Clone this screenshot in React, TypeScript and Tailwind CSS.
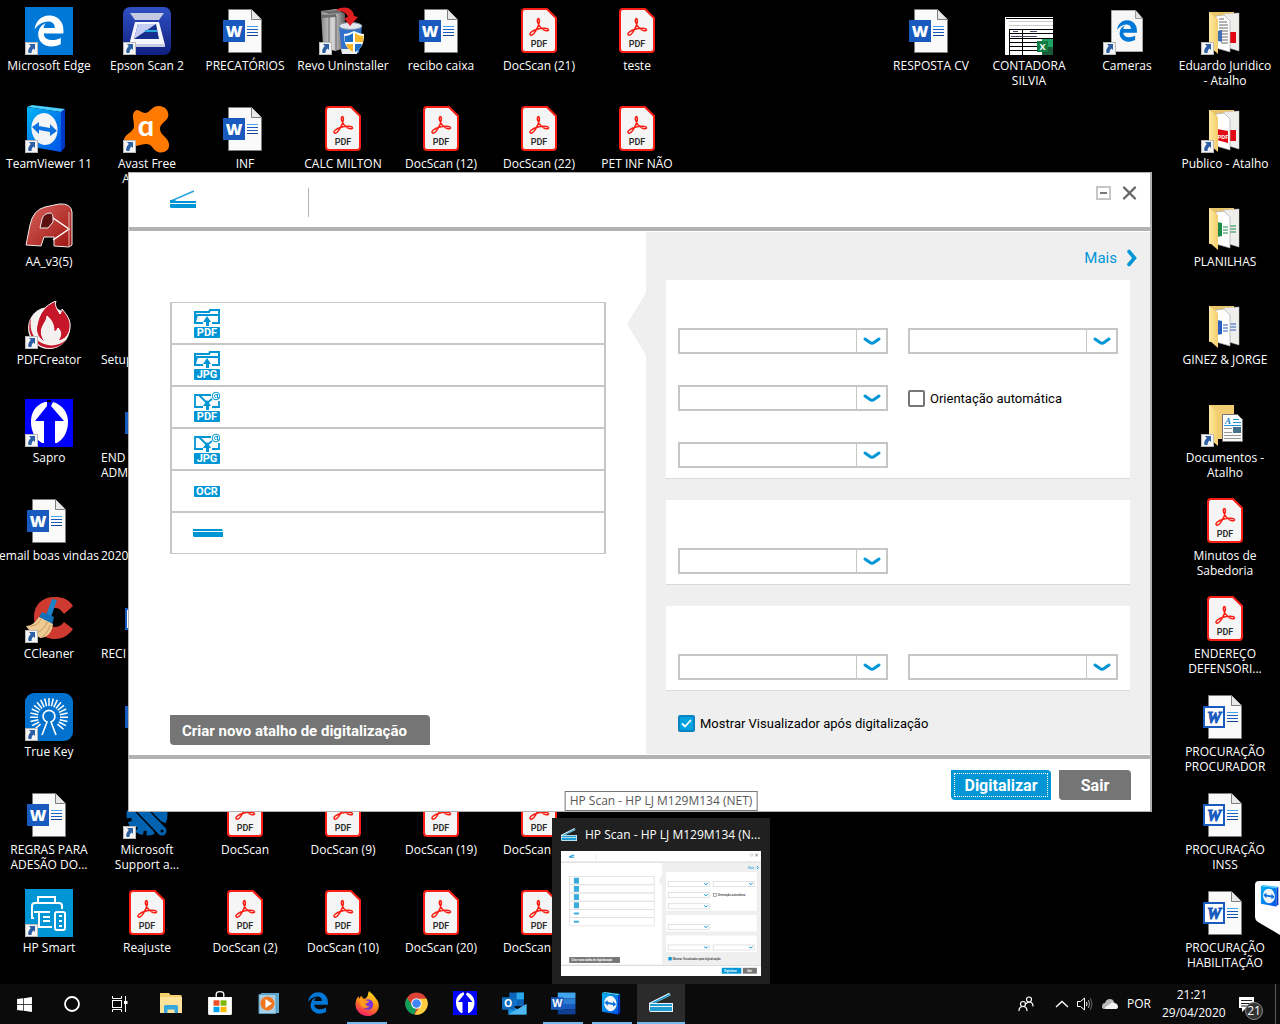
import React, { useState } from 'react';
import clsx from 'clsx';
import { FaEdgeLegacy, FaWindows } from 'react-icons/fa';

const UI_FONT = "font-['Open_Sans','Noto_Sans',sans-serif]";
const HP_FONT = "font-['Roboto','Open_Sans',sans-serif]";

/* ---------- desktop icons, all drawn on a 48x48 box ---------- */

function Svg({ children, size = 48 }: { children: React.ReactNode; size?: number }) {
  return (
    <svg viewBox="0 0 48 48" width={size} height={size} aria-hidden="true">
      {children}
    </svg>
  );
}

function SharedDefs() {
  return (
    <svg width="0" height="0" className="absolute" aria-hidden="true">
      <defs>
        <linearGradient id="tvBlue" x1="0" y1="0" x2="1" y2="1">
          <stop offset="0" stopColor="#00b4f5" />
          <stop offset="1" stopColor="#0052e6" />
        </linearGradient>
        <linearGradient id="epsonBlue" x1="0" y1="0" x2="0" y2="1">
          <stop offset="0" stopColor="#2f50c4" />
          <stop offset="1" stopColor="#10207f" />
        </linearGradient>
        <linearGradient id="cadRed" x1="0" y1="0" x2="1" y2="1">
          <stop offset="0" stopColor="#d9625c" />
          <stop offset="1" stopColor="#9c1512" />
        </linearGradient>
        <linearGradient id="folderYellow" x1="0" y1="0" x2="1" y2="0">
          <stop offset="0" stopColor="#ffe9a2" />
          <stop offset="1" stopColor="#f4cd6b" />
        </linearGradient>
        <linearGradient id="steel" x1="0" y1="0" x2="1" y2="0">
          <stop offset="0" stopColor="#8a8a8a" />
          <stop offset="0.5" stopColor="#d8d8d8" />
          <stop offset="1" stopColor="#5a5a5a" />
        </linearGradient>
        <linearGradient id="foxFire" x1="0.7" y1="0" x2="0.3" y2="1">
          <stop offset="0" stopColor="#ffe226" />
          <stop offset="0.5" stopColor="#ff8a16" />
          <stop offset="1" stopColor="#f5156c" />
        </linearGradient>
      </defs>
    </svg>
  );
}

function EdgeIcon() {
  return (
    <span className="flex size-12 items-center justify-center bg-[#0078d7] text-white">
      <FaEdgeLegacy size={32} />
    </span>
  );
}

function EpsonIcon() {
  return (
    <Svg>
      <rect width="48" height="48" rx="7" fill="url(#epsonBlue)" />
      <path d="M7 6h34l-5 7H12z" fill="#c4c8e0" />
      <path d="M12 15h24l6 23v2H6v-2z" fill="#f5f6fb" />
      <path d="M15 17h18l3 15H11z" fill="#16308f" />
      <path d="M15 17h18L11 32z" fill="#c3cdf3" />
      <path d="M22 23h12v2H22z" fill="#2aa7dc" />
      <path d="M6 37h36v3H6z" fill="#c7cbe4" />
    </Svg>
  );
}

function WordIcon({ old = false }: { old?: boolean }) {
  return (
    <Svg>
      <path d="M7.5 2.5h23l10 10v33h-33z" fill="#fafafa" stroke="#7d7d7d" />
      <path d="M30.5 2.5v10h10" fill="#e8e8e8" stroke="#7d7d7d" />
      <path d="M26 19.5h11" stroke="#41a5ee" />
      <path d="M26 22.5h11M26 25.5h11" stroke="#185abd" />
      <path d="M26 28.5h11" stroke="#103f91" />
      {old ? <rect x="3" y="14" width="20" height="20" fill="#fff" stroke="#185abd" strokeWidth="2" /> : <rect x="2" y="13" width="22" height="22" fill="#185abd" />}
      <text
        x="13"
        y="30"
        textAnchor="middle"
        fontSize="16"
        fontWeight="800"
        fontStyle={old ? 'italic' : 'normal'}
        fontFamily={old ? 'Liberation Serif' : 'Open Sans'}
        fill={old ? '#185abd' : '#fff'}
        stroke={old ? '#185abd' : 'none'}
      >
        W
      </text>
    </Svg>
  );
}

function PdfIcon() {
  return (
    <Svg>
      <path d="M10 2h22l9 9v31a3 3 0 0 1-3 3H10a3 3 0 0 1-3-3V5a3 3 0 0 1 3-3z" fill="#f5f5f5" stroke="#fa1e14" strokeWidth="2" />
      <path
        d="M15.500 28c-2-1.500 2-4.500 6.500-5.800 5-1.500 11-1.400 11.500.4.400 2-4.500 1.200-7-1.300-3-3-5-7.500-3.800-9.300 1.200-1.200 2 .6 1.600 3.200C23.500 20 18.500 29.500 15.500 28z"
        fill="none"
        stroke="#fa1e14"
        strokeWidth="1.500"
      />
      <text x="24" y="39.500" textAnchor="middle" fontSize="9" fontWeight="600" fontFamily="Roboto" fill="#2c2c2c">
        PDF
      </text>
    </Svg>
  );
}

function RevoIcon() {
  return (
    <Svg>
      <path d="M2 4l16-2 8 5v34l-10 3-12-4z" fill="url(#steel)" />
      <path d="M2 4l16-1 6 3-14 1zM3 8l14-1v3L3 11z" fill="#6b6b6b" />
      <path d="M10 10v33M17 9v34" stroke="#666" />
      <path d="M20 19h23l-3 27H23z" fill="#3270c9" />
      <ellipse cx="31.500" cy="19" rx="11.500" ry="3.500" fill="#dfe6ee" stroke="#8494a6" />
      <path d="M22 42h17l-1 5H23z" fill="#e9eef4" />
      <path d="M17 3c9-5 17-2 18 6l4 1-8 9-6-8 4-1c-1-4-6-6-12-7z" fill="#e02020" />
      <path d="M35 24c4 2 7 3 10 3 0 9-2 15-10 19-8-4-10-10-10-19 3 0 6-1 10-3z" fill="#fff" />
      <path d="M34 26v9h-8c0-2-.5-4-.5-6 3 0 6-1 8.500-3zM36 37h7c-1 4-3 6-7 8z" fill="#1e6fc6" />
      <path d="M36 26c3 2 5 3 8.500 3l-.5 6h-8zM34 37v8c-4-2-6-4-7-8z" fill="#fbb82b" />
    </Svg>
  );
}

function TeamViewerIcon({ size = 48 }: { size?: number }) {
  return (
    <Svg size={size}>
      <path d="M2 2l5-2 33 4-4 3z" fill="#4cd0ff" />
      <path d="M2 2l34 5v40L2 41z" fill="url(#tvBlue)" />
      <path d="M36 7l4-3v38l-4 5z" fill="#0038c8" />
      <ellipse cx="19.500" cy="24" rx="13" ry="16" fill="#f2f4f6" transform="rotate(-8 19.500 24)" />
      <path d="M7 22l7-5v4l11 2v-4l7 7-7 5v-4l-11-2v4z" fill="#0b72e0" />
    </Svg>
  );
}

function AvastIcon() {
  return (
    <Svg>
      <path
        d="M12 6c3-3 6 2 10 2 5 0 7-8 15-7 8 1 10 9 7 13-3 4-7 5-7 10 0 6 8 8 9 15 1 6-5 10-11 8-6-2-5-8-12-8-6 0-11 4-19 2-3-1-4-6-2-9 3-4 9-6 9-11 0-6-3-11 1-15z"
        fill="#ff7800"
      />
      <text x="23" y="31" textAnchor="middle" fontSize="29" fontWeight="700" fontFamily="Lato" fill="#fff">
        ɑ
      </text>
    </Svg>
  );
}

function CadIcon() {
  return (
    <Svg>
      <path d="M1 42L5 22Q8 7 20 4l14-3q12-1 13 8v33l-3 2-15-1v-9H19l-3 9z" fill="url(#cadRed)" stroke="#eee" />
      <path d="M15 25l2-9q2-6 8-6 3 0 3 5v4l-5 6z" fill="#5c1010" stroke="#eee" />
      <path d="M28 15l16 11-16 11" fill="none" stroke="#fff" strokeWidth="1.500" />
      <path d="M44 9v34" stroke="#e8b0ac" />
    </Svg>
  );
}

function PdfCreatorIcon() {
  return (
    <Svg>
      <circle cx="24" cy="27" r="21" fill="#f3f1f0" />
      <path d="M6 17C0 32 10 46 24 47c10 0 15-5 17-8-6 5-14 7-22 4C8 39 4 29 6 17z" fill="#c5162a" />
      <path
        d="M31 0c-2 5 2 9 4 13 1-2 2-3 2-5 5 6 9 11 8 19-1 8-6 12-12 13 4-6 3-10 0-13-1 2-2 3-4 4 0-7-2-12-7-16 0 6-8 11-5 20 1 3 2 4 3 6-6-3-10-9-8-17C14 13 20 4 31 0z"
        fill="#c5162a"
        stroke="#fff"
      />
    </Svg>
  );
}

function SaproIcon({ size = 48 }: { size?: number }) {
  return (
    <Svg size={size}>
      <rect width="48" height="48" fill="#0000fe" />
      <path d="M20 3C10 6 6 14 6 23c0 9 4 17 11 21h2V22h-9L22 7V3z" fill="#fff" />
      <path d="M28 3c10 3 15 11 15 20 0 9-4 17-11 21h-2V22h9L26 7z" fill="#fff" />
      <path d="M22 1h4v2h-4z" fill="#000" />
    </Svg>
  );
}

function CCleanerIcon() {
  return (
    <Svg>
      <path d="M48 11C43 3 36 2 29 2 17 2 9 10 9 22c0 13 9 22 21 22 8 0 14-4 18-10l-9-7c-3 4-6 5-9 5-6 0-9-5-9-10 0-6 4-9 9-9 4 0 6 2 9 6z" fill="#cf3a30" />
      <path d="M27 4l5 1-6 17-5-2z" fill="#1e82c8" />
      <path d="M17 17l12 5-2 8-13-8z" fill="#1470b8" />
      <path d="M14 22l14 7c-1 8-5 13-12 14-6-2-11-6-15-12 5 0 9-3 13-9z" fill="#eecb94" />
      <path d="M5 31c5 0 8-2 11-7M11 38c5-2 9-5 11-11M17 42c4-3 7-7 8-12" fill="none" stroke="#c6965a" />
    </Svg>
  );
}

function TrueKeyIcon() {
  const rays = Array.from({ length: 21 }, (_, i) => -130 + i * 13);
  return (
    <Svg>
      <rect width="48" height="48" rx="9" fill="#0072ce" />
      <g stroke="#fff" strokeWidth="1.500">
        {rays.map((a) => (
          <path key={a} d="M24 13V5" transform={`rotate(${a} 24 24)`} />
        ))}
      </g>
      <path d="M17 42l5-13a6 6 0 1 1 4 0l5 13" fill="none" stroke="#fff" strokeWidth="1.600" />
    </Svg>
  );
}

function SupportIcon() {
  return (
    <Svg>
      <circle cx="24" cy="24" r="17" fill="none" stroke="#0063b1" strokeWidth="7" strokeDasharray="7 3" />
      <circle cx="24" cy="24" r="16" fill="#0063b1" />
      <path d="M10 10l29 30" stroke="#000" strokeWidth="12" strokeLinecap="round" />
      <path d="M10 10l29 30" stroke="#0063b1" strokeWidth="9" strokeLinecap="round" />
      <circle cx="39" cy="40" r="1.500" fill="#000" />
    </Svg>
  );
}

function HpSmartIcon() {
  return (
    <Svg>
      <rect width="48" height="48" fill="#0096d6" />
      <g fill="none" stroke="#fff" strokeWidth="2">
        <path d="M9 29H7V17q0-3 3-3h24q3 0 3 3v3M13 13V8h17v5" />
        <path d="M9 23h16M14 23v15h13M18 28h7M18 32h7" />
        <rect x="30" y="23" width="10" height="18" rx="2" />
        <path d="M34 27h3M34 32h3M34 37h3" />
      </g>
    </Svg>
  );
}

function SheetIcon() {
  return (
    <Svg>
      <rect y="10" width="48" height="38" fill="#fff" />
      <path d="M1 11.500h47M4 22.500h44M4 26.500h44M4 31.500h44M4 35.500h30M4 39.500h30M4 43.500h30" stroke="#000" />
      <path d="M4 14.500h44M4 18.500h44" stroke="#ccc" />
      <path d="M4.500 22v26M17.500 22v26" stroke="#000" />
      <path d="M8 24.500h5M25 24.500h7M6 29.500h26" stroke="#446" />
      <rect x="37" y="32" width="11" height="16" fill="#21a366" />
      <rect x="37" y="40" width="11" height="8" fill="#185c37" />
      <rect x="32" y="34" width="11" height="11" fill="#107c41" />
      <text x="37.500" y="43" textAnchor="middle" fontSize="9" fontWeight="700" fontFamily="Open Sans" fill="#fff">
        X
      </text>
    </Svg>
  );
}

function WebPageIcon() {
  return (
    <span className="relative flex size-12 items-center justify-center text-[#0078d7]">
      <svg viewBox="0 0 48 48" className="absolute inset-0 size-12" aria-hidden="true">
        <path d="M8.500 3.500h24l7 8v33h-31z" fill="#f7f7f7" stroke="#aaa" />
        <path d="M32.500 3.500v8h7" fill="#ddd" stroke="#999" />
      </svg>
      <FaEdgeLegacy size={22} className="relative" />
    </span>
  );
}

function FolderIcon({ kind }: { kind: 'text' | 'pdf' | 'excel' | 'word' | 'docs' }) {
  const accent = { text: '#3f6fb5', pdf: '#e30613', excel: '#1c8b4a', word: '#2b5fc4', docs: '#3f6fb5' }[kind];
  if (kind === 'docs') {
    return (
      <Svg>
        <path d="M8 6h25v34H8z" fill="#f0cd70" />
        <path d="M8 6l9 7v34l-9-8z" fill="url(#folderYellow)" />
        <path d="M21.500 15.500h15l5 5v22h-20z" fill="#fbfbfb" stroke="#777" />
        <path d="M23 26.500h17" stroke="#2196d3" />
        <path d="M32 20.500h6M32 23.500h8" stroke="#2196d3" />
        <path d="M23 29.500h8M23 33.500h8M23 36.500h17M23 39.500h17" stroke="#999" />
        <rect x="32" y="28" width="8" height="6" fill="#45718c" />
        <text x="27" y="25" textAnchor="middle" fontSize="9" fontWeight="700" fontStyle="italic" fontFamily="Liberation Serif" fill="#1580c4">
          A
        </text>
      </Svg>
    );
  }
  return (
    <Svg>
      <path d="M8 5h25v36H8z" fill="#e9c569" />
      <path d="M23 7l15-1v38l-10-3z" fill="#eeeeec" stroke="#c4c4c4" strokeWidth="0.500" />
      {(kind === 'pdf' || kind === 'text') && <path d="M29 25h6v11h-6z" fill="#e30613" />}
      {(kind === 'excel' || kind === 'word') && <path d="M29 23h6M29 26h6M29 29h6" stroke={accent} />}
      <path d="M15 9l8-1 6 6v31l-14-4z" fill="#fff" stroke="#a9a9a9" strokeWidth="0.700" />
      {kind === 'pdf' && <path d="M16 24l11 2v12l-11-3z" fill="#e30613" />}
      {kind === 'pdf' && (
        <text x="22" y="34" textAnchor="middle" fontSize="6" fontWeight="700" fontFamily="Roboto" fill="#fff">
          PDF
        </text>
      )}
      {(kind === 'excel' || kind === 'word') && (
        <>
          <path d="M16 19l5 1v13l-5 1z" fill={accent} />
          <path d="M22 24h5M22 27h5M22 30h5" stroke={accent} strokeWidth="1.200" />
        </>
      )}
      {kind === 'text' && (
        <>
          <path d="M18 12h5M18 15h8M18 18h9M18 21h9M18 24h9M18 27h9M18 30h9M18 33h9M20 36h7" stroke="#666" />
          <path d="M17 24l4-1v12l-4-1z" fill={accent} />
        </>
      )}
      <path d="M8 5l9 7v35l-9-8z" fill="url(#folderYellow)" />
    </Svg>
  );
}

function ShortcutBadge() {
  return (
    <svg viewBox="0 0 13 13" className="absolute bottom-0 left-0 size-[13px]" aria-hidden="true">
      <rect x="0.500" y="0.500" width="12" height="12" fill="#f4f4f4" stroke="#b9b9b9" />
      <path d="M4 2h6v6L8.500 6.500C7 8 6.500 9 6.500 11H3.500C2.500 8.500 4 6 5.800 4z" fill="#2c5fa3" />
    </svg>
  );
}

type DesktopItem = {
  col: number;
  row: number;
  label: string;
  icon?: React.ReactNode;
  shortcut?: boolean;
  start?: boolean;
};

const word = <WordIcon />;
const oldWord = <WordIcon old />;
const pdf = <PdfIcon />;

const desktopItems: DesktopItem[] = [
  { col: 1, row: 1, label: 'Microsoft Edge', icon: <EdgeIcon />, shortcut: true },
  { col: 2, row: 1, label: 'Epson Scan 2', icon: <EpsonIcon />, shortcut: true },
  { col: 3, row: 1, label: 'PRECATÓRIOS', icon: word },
  { col: 4, row: 1, label: 'Revo Uninstaller', icon: <RevoIcon />, shortcut: true },
  { col: 5, row: 1, label: 'recibo caixa', icon: word },
  { col: 6, row: 1, label: 'DocScan (21)', icon: pdf },
  { col: 7, row: 1, label: 'teste', icon: pdf },
  { col: 10, row: 1, label: 'RESPOSTA CV', icon: word },
  { col: 11, row: 1, label: 'CONTADORA\nSILVIA', icon: <SheetIcon /> },
  { col: 12, row: 1, label: 'Cameras', icon: <WebPageIcon />, shortcut: true },
  { col: 13, row: 1, label: 'Eduardo Juridico\n- Atalho', icon: <FolderIcon kind="text" />, shortcut: true },
  { col: 1, row: 2, label: 'TeamViewer 11', icon: <TeamViewerIcon />, shortcut: true },
  { col: 2, row: 2, label: 'Avast Free\nAntivirus', icon: <AvastIcon />, shortcut: true },
  { col: 3, row: 2, label: 'INF', icon: word },
  { col: 4, row: 2, label: 'CALC MILTON', icon: pdf },
  { col: 5, row: 2, label: 'DocScan (12)', icon: pdf },
  { col: 6, row: 2, label: 'DocScan (22)', icon: pdf },
  { col: 7, row: 2, label: 'PET INF NÃO', icon: pdf },
  { col: 13, row: 2, label: 'Publico - Atalho', icon: <FolderIcon kind="pdf" />, shortcut: true },
  { col: 1, row: 3, label: 'AA_v3(5)', icon: <CadIcon /> },
  { col: 13, row: 3, label: 'PLANILHAS', icon: <FolderIcon kind="excel" /> },
  { col: 1, row: 4, label: 'PDFCreator', icon: <PdfCreatorIcon />, shortcut: true },
  { col: 2, row: 4, label: 'Setup', start: true },
  { col: 13, row: 4, label: 'GINEZ & JORGE', icon: <FolderIcon kind="word" /> },
  { col: 1, row: 5, label: 'Sapro', icon: <SaproIcon />, shortcut: true },
  { col: 2, row: 5, label: 'END\nADM', icon: word, start: true },
  { col: 13, row: 5, label: 'Documentos -\nAtalho', icon: <FolderIcon kind="docs" />, shortcut: true },
  { col: 1, row: 6, label: 'email boas vindas', icon: word },
  { col: 2, row: 6, label: '2020-', start: true },
  { col: 13, row: 6, label: 'Minutos de\nSabedoria', icon: pdf },
  { col: 1, row: 7, label: 'CCleaner', icon: <CCleanerIcon />, shortcut: true },
  { col: 2, row: 7, label: 'RECI', icon: oldWord, start: true },
  { col: 13, row: 7, label: 'ENDEREÇO\nDEFENSORI...', icon: pdf },
  { col: 1, row: 8, label: 'True Key', icon: <TrueKeyIcon />, shortcut: true },
  { col: 2, row: 8, label: '', icon: word },
  { col: 13, row: 8, label: 'PROCURAÇÃO\nPROCURADOR', icon: oldWord },
  { col: 1, row: 9, label: 'REGRAS PARA\nADESÃO DO...', icon: word },
  { col: 2, row: 9, label: 'Microsoft\nSupport a...', icon: <SupportIcon />, shortcut: true },
  { col: 3, row: 9, label: 'DocScan', icon: pdf },
  { col: 4, row: 9, label: 'DocScan (9)', icon: pdf },
  { col: 5, row: 9, label: 'DocScan (19)', icon: pdf },
  { col: 6, row: 9, label: 'DocScan (29)', icon: pdf },
  { col: 13, row: 9, label: 'PROCURAÇÃO\nINSS', icon: oldWord },
  { col: 1, row: 10, label: 'HP Smart', icon: <HpSmartIcon />, shortcut: true },
  { col: 2, row: 10, label: 'Reajuste', icon: pdf },
  { col: 3, row: 10, label: 'DocScan (2)', icon: pdf },
  { col: 4, row: 10, label: 'DocScan (10)', icon: pdf },
  { col: 5, row: 10, label: 'DocScan (20)', icon: pdf },
  { col: 6, row: 10, label: 'DocScan (30)', icon: pdf },
  { col: 13, row: 10, label: 'PROCURAÇÃO\nHABILITAÇÃO', icon: oldWord },
];

function DesktopIcon({ item }: { item: DesktopItem }) {
  return (
    <div className="flex min-w-0 flex-col items-center gap-[3px] pt-[7px]" style={{ gridColumn: item.col, gridRow: item.row }}>
      <div className="relative size-12 shrink-0">
        {item.icon}
        {item.shortcut && <ShortcutBadge />}
      </div>
      <span className={clsx('text-xs leading-[15px] whitespace-pre text-white', item.start ? 'self-start pl-[3px]' : 'text-center')}>{item.label}</span>
    </div>
  );
}

/* ---------- HP Scan window ---------- */

function ScannerIcon({ className }: { className?: string }) {
  return (
    <svg viewBox="0 0 28 20" className={className} aria-hidden="true">
      <path d="M2 12L25 2" stroke="#2ea3dc" strokeWidth="1.500" />
      <path d="M1 11h6l-1 1h21v2H1z" fill="#0096d6" />
      <path d="M1 15h26v4H2l-1-1z" fill="#0096d6" />
    </svg>
  );
}

function Badge({ text }: { text: string }) {
  return (
    <span className="flex h-[11px] w-[26px] items-center justify-center rounded-[1px] bg-[#0096d6] text-[11px] leading-[13px] font-bold text-white">
      {text}
    </span>
  );
}

function ShortcutGlyph({ kind, text }: { kind: 'folder' | 'mail' | 'ocr' | 'scan'; text: string }) {
  if (kind === 'scan') {
    return (
      <svg viewBox="0 0 30 8" width="30" height="8" className="-ml-px" aria-hidden="true">
        <path d="M0 0h29l1 2H0zM0 3h30v5H1L0 7z" fill="#0096d6" />
      </svg>
    );
  }
  if (kind === 'ocr') {
    return <Badge text={text} />;
  }
  return (
    <span className="flex flex-col gap-px pb-px">
      <svg viewBox="0 0 26 19" width="26" height="19" aria-hidden="true">
        {kind === 'folder' ? (
          <path d="M9 16H1V5h14l1-2h9v13h-7M1 15l2-7h21" fill="none" stroke="#0096d6" strokeWidth="2" />
        ) : (
          <>
            <path d="M9 16H1V4h16M25 10v6h-7M5 4l8 8 5-4" fill="none" stroke="#0096d6" strokeWidth="1.800" />
            <circle cx="22" cy="5" r="3.800" fill="none" stroke="#0096d6" />
            <path d="M23.500 3v4h2M23.500 5a1.500 1.500 0 1 0-1 1.500" fill="none" stroke="#0096d6" />
          </>
        )}
        <path d="M13 9l4 6h-2v4h-3v-4h-3z" fill="#0096d6" />
      </svg>
      <Badge text={text} />
    </span>
  );
}

const scanShortcuts = [
  { id: 'save-pdf', kind: 'folder', text: 'PDF' },
  { id: 'save-jpg', kind: 'folder', text: 'JPG' },
  { id: 'mail-pdf', kind: 'mail', text: 'PDF' },
  { id: 'mail-jpg', kind: 'mail', text: 'JPG' },
  { id: 'ocr', kind: 'ocr', text: 'OCR' },
  { id: 'scan', kind: 'scan', text: '' },
] as const;

function Dropdown({ name }: { name: string }) {
  return (
    <div className="relative h-[26px] min-w-0 border-2 border-[#c6c6c6] bg-white">
      <select aria-label={name} className="size-full appearance-none bg-transparent pr-8 pl-2 text-sm outline-none">
        <option></option>
      </select>
      <span className="pointer-events-none absolute inset-y-0 right-0 flex w-[30px] items-center justify-center border-l border-[#c6c6c6]">
        <svg viewBox="0 0 18 10" width="18" height="10" aria-hidden="true">
          <path d="M2 3l5 3.500q2 1.300 4 0L16 3" fill="none" stroke="#0096d6" strokeWidth="3" strokeLinecap="round" />
        </svg>
      </span>
    </div>
  );
}

function Card({ children }: { children: React.ReactNode }) {
  return (
    <section className="grid grid-cols-2 gap-x-5 gap-y-[31px] border-b border-[#d9d9d9] bg-white px-3 pt-12 pb-[10px]">{children}</section>
  );
}

function CheckField({ label, checked, onChange }: { label: string; checked: boolean; onChange: (value: boolean) => void }) {
  return (
    <label className="flex items-center gap-[5px] text-[13px] leading-[17px] whitespace-nowrap text-black">
      <span className="relative size-[17px]">
        <input
          type="checkbox"
          checked={checked}
          onChange={(e) => onChange(e.target.checked)}
          className="block size-[17px] appearance-none rounded-[2px] border-2 border-[#767676] bg-white checked:border-[#0a84c1] checked:bg-[#00a3e0]"
        />
        {checked && (
          <svg viewBox="0 0 17 17" className="pointer-events-none absolute inset-0 size-[17px]" aria-hidden="true">
            <path d="M4 8.500l3 3 6-6.500" fill="none" stroke="#fff" strokeWidth="1.800" />
          </svg>
        )}
      </span>
      {label}
    </label>
  );
}

function ScanWindow() {
  const [autoOrient, setAutoOrient] = useState(false);
  const [showViewer, setShowViewer] = useState(true);

  return (
    <div className={clsx('absolute top-[172px] left-[10%] w-4/5 border border-r-2 border-[#b2b2b2] bg-white', HP_FONT)}>
      <header className="flex h-[58px] items-start justify-between border-b-4 border-[#b2b2b2] pr-[13px] pl-10">
        <div className="flex pt-[15px]">
          <ScannerIcon className="mt-px h-5 w-7" />
          <span className="ml-[111px] h-[29px] w-px bg-[#b2b2b2]" />
        </div>
        <div className="flex items-center gap-[11px] pt-3">
          <button type="button" aria-label="Minimizar" className="flex h-[14px] w-[15px] items-center justify-center border-2 border-[#c6c6c6]">
            <span className="h-[2px] w-[7px] bg-[#767676]" />
          </button>
          <button type="button" aria-label="Fechar">
            <svg viewBox="0 0 15 16" width="15" height="16" aria-hidden="true">
              <path d="M2 2.500l11 11M13 2.500l-11 11" stroke="#666" strokeWidth="2.400" strokeLinecap="round" />
            </svg>
          </button>
        </div>
      </header>

      <main className="flex border-b-4 border-[#b2b2b2] py-px">
        <div className="flex flex-1 flex-col justify-between pt-[70px] pr-10 pb-[9px] pl-[41px]">
          <ul className="divide-y-2 divide-[#c6c6c6] border-x-2 border-y border-[#c6c6c6]">
            {scanShortcuts.map((s) => (
              <li key={s.id}>
                <button type="button" aria-label={`${s.kind} ${s.text}`} className="flex h-10 w-full items-center pl-[22px]">
                  <ShortcutGlyph kind={s.kind} text={s.text} />
                </button>
              </li>
            ))}
          </ul>
          <button type="button" className="h-[30px] w-[260px] self-start rounded-tr-[4px] rounded-bl-[4px] bg-[#757575] pt-[2px] pl-3 text-left text-[15px] font-bold whitespace-nowrap text-white">
            Criar novo atalho de digitalização
          </button>
        </div>

        <div className="relative w-[504px] shrink-0 bg-[#efefef] pt-[14px] pr-5 pb-[22px] pl-5">
          <svg viewBox="0 0 20 62" className="absolute top-[61px] -left-5 h-[62px] w-5" aria-hidden="true">
            <path d="M20 0L1 31l19 31z" fill="#efefef" />
          </svg>
          <div className="-mr-2 flex justify-end">
            <a href="#mais" className="flex items-center gap-[9px] text-[15px] leading-6 text-[#0096d6]">
              Mais
              <svg viewBox="0 0 12 18" width="12" height="18" aria-hidden="true">
                <path d="M3 2.500L8.500 9 3 15.500" fill="none" stroke="#0096d6" strokeWidth="3.600" strokeLinecap="round" />
              </svg>
            </a>
          </div>
          <div className="mt-[10px] flex flex-col gap-[21px]">
            <Card>
              <Dropdown name="Tipo de item" />
              <Dropdown name="Tamanho da página" />
              <Dropdown name="Modo de cor" />
              <CheckField label="Orientação automática" checked={autoOrient} onChange={setAutoOrient} />
              <Dropdown name="Origem" />
            </Card>
            <Card>
              <Dropdown name="Destino" />
            </Card>
            <Card>
              <Dropdown name="Tipo de arquivo" />
              <Dropdown name="Qualidade" />
            </Card>
          </div>
          <div className="mt-6 flex px-3">
            <CheckField label="Mostrar Visualizador após digitalização" checked={showViewer} onChange={setShowViewer} />
          </div>
        </div>
      </main>

      <footer className="flex justify-end gap-2 pt-[11px] pr-[19px] pb-[11px] text-base font-bold text-white">
        <button type="button" className="h-[30px] w-[100px] rounded-tr-[4px] rounded-bl-[4px] bg-[#0096d6] p-[3px]">
          <span className="flex h-full items-center justify-center border border-dotted border-white pt-[2px]">Digitalizar</span>
        </button>
        <button type="button" className="h-[30px] w-[72px] rounded-tr-[4px] rounded-bl-[4px] bg-[#757575] pt-[2px]">
          Sair
        </button>
      </footer>
    </div>
  );
}

/* ---------- taskbar ---------- */

// miniature of the scan window shown in the hover preview
function WindowThumbnail() {
  const combos = [
    [549, 156],
    [779, 156],
    [549, 213],
    [549, 270],
    [549, 376],
    [549, 481],
    [779, 481],
  ];
  return (
    <svg viewBox="0 0 1024 640" className="block h-[125px] w-full" aria-hidden="true">
      <rect width="1024" height="640" fill="#fff" />
      <path d="M0 57h1024M0 585h1024" stroke="#c4c4c4" strokeWidth="4" />
      <path d="M42 30L67 20M42 32h26" stroke="#2ea3dc" strokeWidth="6" />
      <path d="M180 16v29" stroke="#ddd" strokeWidth="3" />
      <path d="M970 14h12v12h-12z" fill="none" stroke="#bbb" strokeWidth="3" />
      <path d="M995 14l13 13m0-13l-13 13" stroke="#666" strokeWidth="4" />
      <path d="M518 60h506v522H518V182l-19-30 19-31z" fill="#efefef" />
      <path d="M538 108h464v198H538zM538 328h464v84H538zM538 433h464v84H538z" fill="#fff" />
      {[0, 1, 2, 3, 4, 5].map((i) => (
        <g key={i}>
          <rect x="43" y={131 + i * 42} width="434" height="42" fill="none" stroke="#e0e0e0" strokeWidth="4" />
          <rect x="66" y={i < 4 ? 137 + i * 42 : 147 + i * 42} width="26" height={i < 4 ? 30 : 10} fill="#3aabdd" />
        </g>
      ))}
      {combos.map(([x, y]) => (
        <g key={`${x}-${y}`}>
          <rect x={x} y={y} width="210" height="26" fill="#fff" stroke="#dadada" strokeWidth="4" />
          <path d={`M${x + 184} ${y + 9}l9 7 9-7`} fill="none" stroke="#0096d6" strokeWidth="5" />
        </g>
      ))}
      <rect x="781" y="218" width="14" height="14" fill="#fff" stroke="#777" strokeWidth="3" />
      <rect x="550" y="543" width="17" height="17" fill="#0096d6" />
      <rect x="42" y="543" width="260" height="30" fill="#757575" />
      <rect x="823" y="598" width="100" height="30" fill="#0096d6" />
      <rect x="931" y="598" width="72" height="30" fill="#757575" />
      <g fontFamily="Roboto" fontSize="14">
        <text x="802" y="231">Orientação automática</text>
        <text x="572" y="557">Mostrar Visualizador após digitalização</text>
        <text x="958" y="91" fill="#0096d6">Mais</text>
        <g fill="#fff" fontWeight="700">
          <text x="54" y="564">Criar novo atalho de digitalização</text>
          <text x="836" y="619">Digitalizar</text>
          <text x="953" y="619">Sair</text>
        </g>
      </g>
      <path d="M1003 77l7 8-7 8" fill="none" stroke="#0096d6" strokeWidth="5" />
    </svg>
  );
}

function TaskScannerIcon({ size }: { size: number }) {
  return (
    <svg viewBox="0 0 24 24" width={size} height={size} aria-hidden="true">
      <path d="M1 13L21 3" stroke="#e8f4fa" strokeWidth="3" />
      <path d="M2 13L21 3.500" stroke="#1f9bd1" strokeWidth="1.500" />
      <path d="M0 12h24v9H1l-1-2z" fill="#e8f4fa" />
      <path d="M1 13h22v2H1zM1 16h22v4H1z" fill="#1f9bd1" />
    </svg>
  );
}

function FileExplorerIcon() {
  return (
    <Svg size={24}>
      <path d="M2 4h18l3 4h22v36H2z" fill="#f4cf6c" />
      <path d="M2 12h44v32H2z" fill="#ffe299" />
      <path d="M10 44V31q0-3 3-3h22q3 0 3 3v13h-7v-7H17v7z" fill="#35a7df" />
    </Svg>
  );
}

function StoreIcon() {
  return (
    <Svg size={26}>
      <path d="M17 14V8q0-5 7-5t7 5v6" fill="none" stroke="#fff" strokeWidth="2.500" />
      <path d="M2 13h44v31q0 2-2 2H4q-2 0-2-2z" fill="#fff" />
      <path d="M12 19h11v10H12z" fill="#f25022" />
      <path d="M25 19h11v10H25z" fill="#7fba00" />
      <path d="M12 31h11v10H12z" fill="#00a4ef" />
      <path d="M25 31h11v10H25z" fill="#ffb900" />
    </Svg>
  );
}

function MediaIcon() {
  return (
    <Svg size={24}>
      <path d="M8 4h36v40H8z" fill="#5fa8cf" />
      <path d="M4 7h34v38H4z" fill="#a9cfe4" stroke="#5a9bc0" strokeWidth="2" />
      <circle cx="21" cy="25" r="14" fill="#f2761d" />
      <path d="M17 16l13 9-13 9z" fill="#fff" />
    </Svg>
  );
}

function FirefoxIcon() {
  return (
    <Svg size={25}>
      <path d="M27 0c3 4 8 6 12 13 6 6 8 13 6 20-3 9-11 15-21 15C11 48 1 38 1 26c0-7 2-12 6-16l1 5 4-6 4 6c4 0 6-2 8-5 1-3 1-6 3-10z" fill="url(#foxFire)" />
      <circle cx="25" cy="26" r="10" fill="#7a35d8" />
      <path d="M8 16c5-3 10-2 13 2l6 1c-1 3-4 4-7 5 1 4 3 6 8 5-4 6-16 5-18-4z" fill="#ff9a1c" />
    </Svg>
  );
}

function ChromeIcon() {
  return (
    <Svg size={23}>
      <circle cx="24" cy="24" r="23" fill="#db4437" />
      <path d="M4 12l12 17 8 6-5 12A23 23 0 0 1 4 12z" fill="#0f9d58" />
      <path d="M45 14a23 23 0 0 1-25 33l12-18-2-15z" fill="#ffcd40" />
      <circle cx="24" cy="24" r="11" fill="#fff" />
      <circle cx="24" cy="24" r="9" fill="#4285f4" />
    </Svg>
  );
}

function OutlookIcon() {
  return (
    <Svg size={25}>
      <path d="M14 3h28v26H14z" fill="#0a63b8" />
      <path d="M28 3h14v13H28z" fill="#28a8ea" />
      <path d="M14 16h14v12H14z" fill="#0f78d4" />
      <path d="M12 25l18 10 17-10v20H12z" fill="#1490df" />
      <path d="M12 45l35-20v20z" fill="#50b8f0" />
      <path d="M0 12h24v24H0z" fill="#0f6cbd" />
      <text x="12" y="31" textAnchor="middle" fontSize="20" fontWeight="700" fontFamily="Open Sans" fill="#fff">
        O
      </text>
    </Svg>
  );
}

function WordAppIcon() {
  return (
    <Svg size={25}>
      <path d="M13 3h34v11H13z" fill="#41a5ee" />
      <path d="M13 14h34v11H13z" fill="#2b7cd3" />
      <path d="M13 25h34v10H13z" fill="#185abd" />
      <path d="M13 35h34v10H13z" fill="#103f91" />
      <path d="M0 12h24v24H0z" fill="#185abd" />
      <text x="12" y="31" textAnchor="middle" fontSize="20" fontWeight="700" fontFamily="Open Sans" fill="#fff">
        W
      </text>
    </Svg>
  );
}

function TaskViewIcon() {
  return (
    <svg viewBox="0 0 18 18" width="18" height="18" fill="none" stroke="#fff" aria-hidden="true">
      <path d="M1.500 1v2.500h9V1M1.500 17v-2.500h9V17" />
      <rect x="1.500" y="5.500" width="9" height="7" />
      <path d="M14.500 1v16" />
      <path d="M13 7.500h3.500" strokeWidth="3" />
    </svg>
  );
}

const systemButtons = [
  { name: 'Iniciar', icon: <FaWindows size={17} className="text-white" /> },
  {
    name: 'Cortana',
    icon: (
      <svg viewBox="0 0 18 18" width="18" height="18" aria-hidden="true">
        <circle cx="9" cy="9" r="7" fill="none" stroke="#fff" strokeWidth="1.800" />
      </svg>
    ),
  },
  { name: 'Visão de tarefas', icon: <TaskViewIcon /> },
];

const apps = [
  { name: 'Explorador de Arquivos', icon: <FileExplorerIcon /> },
  { name: 'Microsoft Store', icon: <StoreIcon /> },
  { name: 'Reprodutor de mídia', icon: <MediaIcon /> },
  { name: 'Microsoft Edge', icon: <FaEdgeLegacy size={22} className="text-[#0078d7]" /> },
  { name: 'Firefox', icon: <FirefoxIcon />, running: true },
  { name: 'Chrome', icon: <ChromeIcon /> },
  { name: 'Sapro', icon: <SaproIcon size={24} /> },
  { name: 'Outlook', icon: <OutlookIcon /> },
  { name: 'Word', icon: <WordAppIcon />, running: true },
  { name: 'TeamViewer', icon: <TeamViewerIcon size={23} />, running: true },
];

function ScanTask() {
  return (
    <div className="relative h-full w-12">
      <button type="button" aria-label="HP Scan" className="flex size-full items-center justify-center border-b-2 border-[#76b9ed] bg-[#2b2b2b]">
        <TaskScannerIcon size={24} />
      </button>
      <div className="absolute bottom-full left-1/2 w-[218px] -translate-x-1/2 bg-[#202020] px-[9px] pb-2">
        <div className="flex h-[33px] items-center gap-2 text-white">
          <TaskScannerIcon size={16} />
          <span className="text-xs whitespace-nowrap">HP Scan - HP LJ M129M134 (N...</span>
        </div>
        <WindowThumbnail />
      </div>
      <div role="tooltip" className="absolute bottom-full left-1/2 mb-[173px] -translate-x-1/2 border border-[#767676] bg-white px-1 text-xs leading-[18px] whitespace-nowrap text-[#575757]">
        HP Scan - HP LJ M129M134 (NET)
      </div>
    </div>
  );
}

function Tray() {
  return (
    <div className="ml-auto flex h-full items-center text-xs text-white">
      <button type="button" aria-label="Pessoas">
        <svg viewBox="0 0 16 16" width="16" height="16" fill="none" stroke="#fff" strokeWidth="1.200" aria-hidden="true">
          <circle cx="11" cy="3.500" r="2.500" />
          <circle cx="5" cy="8" r="2.500" />
          <path d="M1 15c0-3 2-4.500 4-4.500S9 12 9 15M8 8c1-1.500 2-2 3-2 2 0 4 1.500 4 4.500" />
        </svg>
      </button>
      <button type="button" aria-label="Mostrar ícones ocultos" className="ml-[21px]">
        <svg viewBox="0 0 14 8" width="14" height="8" aria-hidden="true">
          <path d="M1 7l6-5.500L13 7" fill="none" stroke="#fff" strokeWidth="1.300" />
        </svg>
      </button>
      <button type="button" aria-label="Volume" className="ml-[7px]">
        <svg viewBox="0 0 18 16" width="18" height="16" fill="none" stroke="#fff" aria-hidden="true">
          <path d="M1.500 5.500h3L8.500 2v12l-4-3.500h-3z" />
          <path d="M10.500 6q1 2 0 4" />
          <path d="M12.500 4q2 4 0 8" stroke="#aaa" />
          <path d="M14.500 2q3 6 0 12" stroke="#666" />
        </svg>
      </button>
      <button type="button" aria-label="OneDrive" className="ml-[7px]">
        <svg viewBox="0 0 17 12" width="17" height="12" aria-hidden="true">
          <path d="M1 9q0-4 3-4 1-4 5-4 3 0 4 3L4 11q-3 0-3-2z" fill="#b8b8b8" />
          <path d="M4 11q0-3 4-4 3-4 6-2 3 1 3 4 0 2-3 2z" fill="#f2f2f2" />
        </svg>
      </button>
      <button type="button" className="ml-[9px]">POR</button>
      <div className="ml-[11px] w-[60px] text-center leading-[18px] whitespace-nowrap">
        21:21
        <br />
        29/04/2020
      </div>
      <button type="button" aria-label="Notificações" className="relative mt-2 ml-4 h-6 w-[25px]">
        <svg viewBox="0 0 17 17" width="17" height="17" className="absolute top-0 left-0" aria-hidden="true">
          <path d="M1 1h15v11H8l-4 4v-4H1z" fill="#fff" />
          <path d="M3 4.500h11M3 7.500h11M3 10h6" stroke="#222" />
        </svg>
        <span className="absolute right-0 bottom-0 flex size-[18px] items-center justify-center rounded-full border border-[#8a8a8a] bg-[#333] text-xs leading-none">21</span>
      </button>
      <span className="ml-3 h-full w-px bg-[#5a5a5a]" />
      <span className="w-1" />
    </div>
  );
}

function Taskbar() {
  return (
    <footer className="relative z-10 flex h-10 shrink-0 items-center bg-[#0b0b0b]">
      <div className="flex h-full">
        {systemButtons.map((b) => (
          <button key={b.name} type="button" aria-label={b.name} className="flex h-full w-12 items-center justify-center">
            {b.icon}
          </button>
        ))}
      </div>
      <div className="ml-[3px] flex h-full gap-px">
        {apps.map((a) => (
          <button key={a.name} type="button" aria-label={a.name} className="flex h-full w-12 flex-col items-center">
            <span className="flex flex-1 items-center">{a.icon}</span>
            <span className={clsx('h-[2px] w-10', a.running && 'bg-[#76b9ed]')} />
          </button>
        ))}
        <ScanTask />
      </div>
      <Tray />
    </footer>
  );
}

export default function App() {
  return (
    <div className={clsx('flex min-h-screen flex-col bg-black', UI_FONT)}>
      <SharedDefs />
      <div className="relative flex-1 overflow-hidden">
        <div className="grid auto-rows-[98px] grid-cols-[repeat(13,minmax(0,1fr))] pr-[6px]">
          {desktopItems.map((item) => (
            <DesktopIcon key={`${item.col}-${item.row}`} item={item} />
          ))}
        </div>
        <ScanWindow />
        <div className="absolute right-0 bottom-[49px]">
          <svg viewBox="0 0 25 54" width="25" height="54" className="block" aria-hidden="true">
            <path d="M25 0H4Q0 0 0 4v32q0 3 3 5l22 13z" fill="#fff" />
          </svg>
          <span className="absolute top-1 left-[5px]">
            <TeamViewerIcon size={22} />
          </span>
        </div>
      </div>
      <Taskbar />
    </div>
  );
}
